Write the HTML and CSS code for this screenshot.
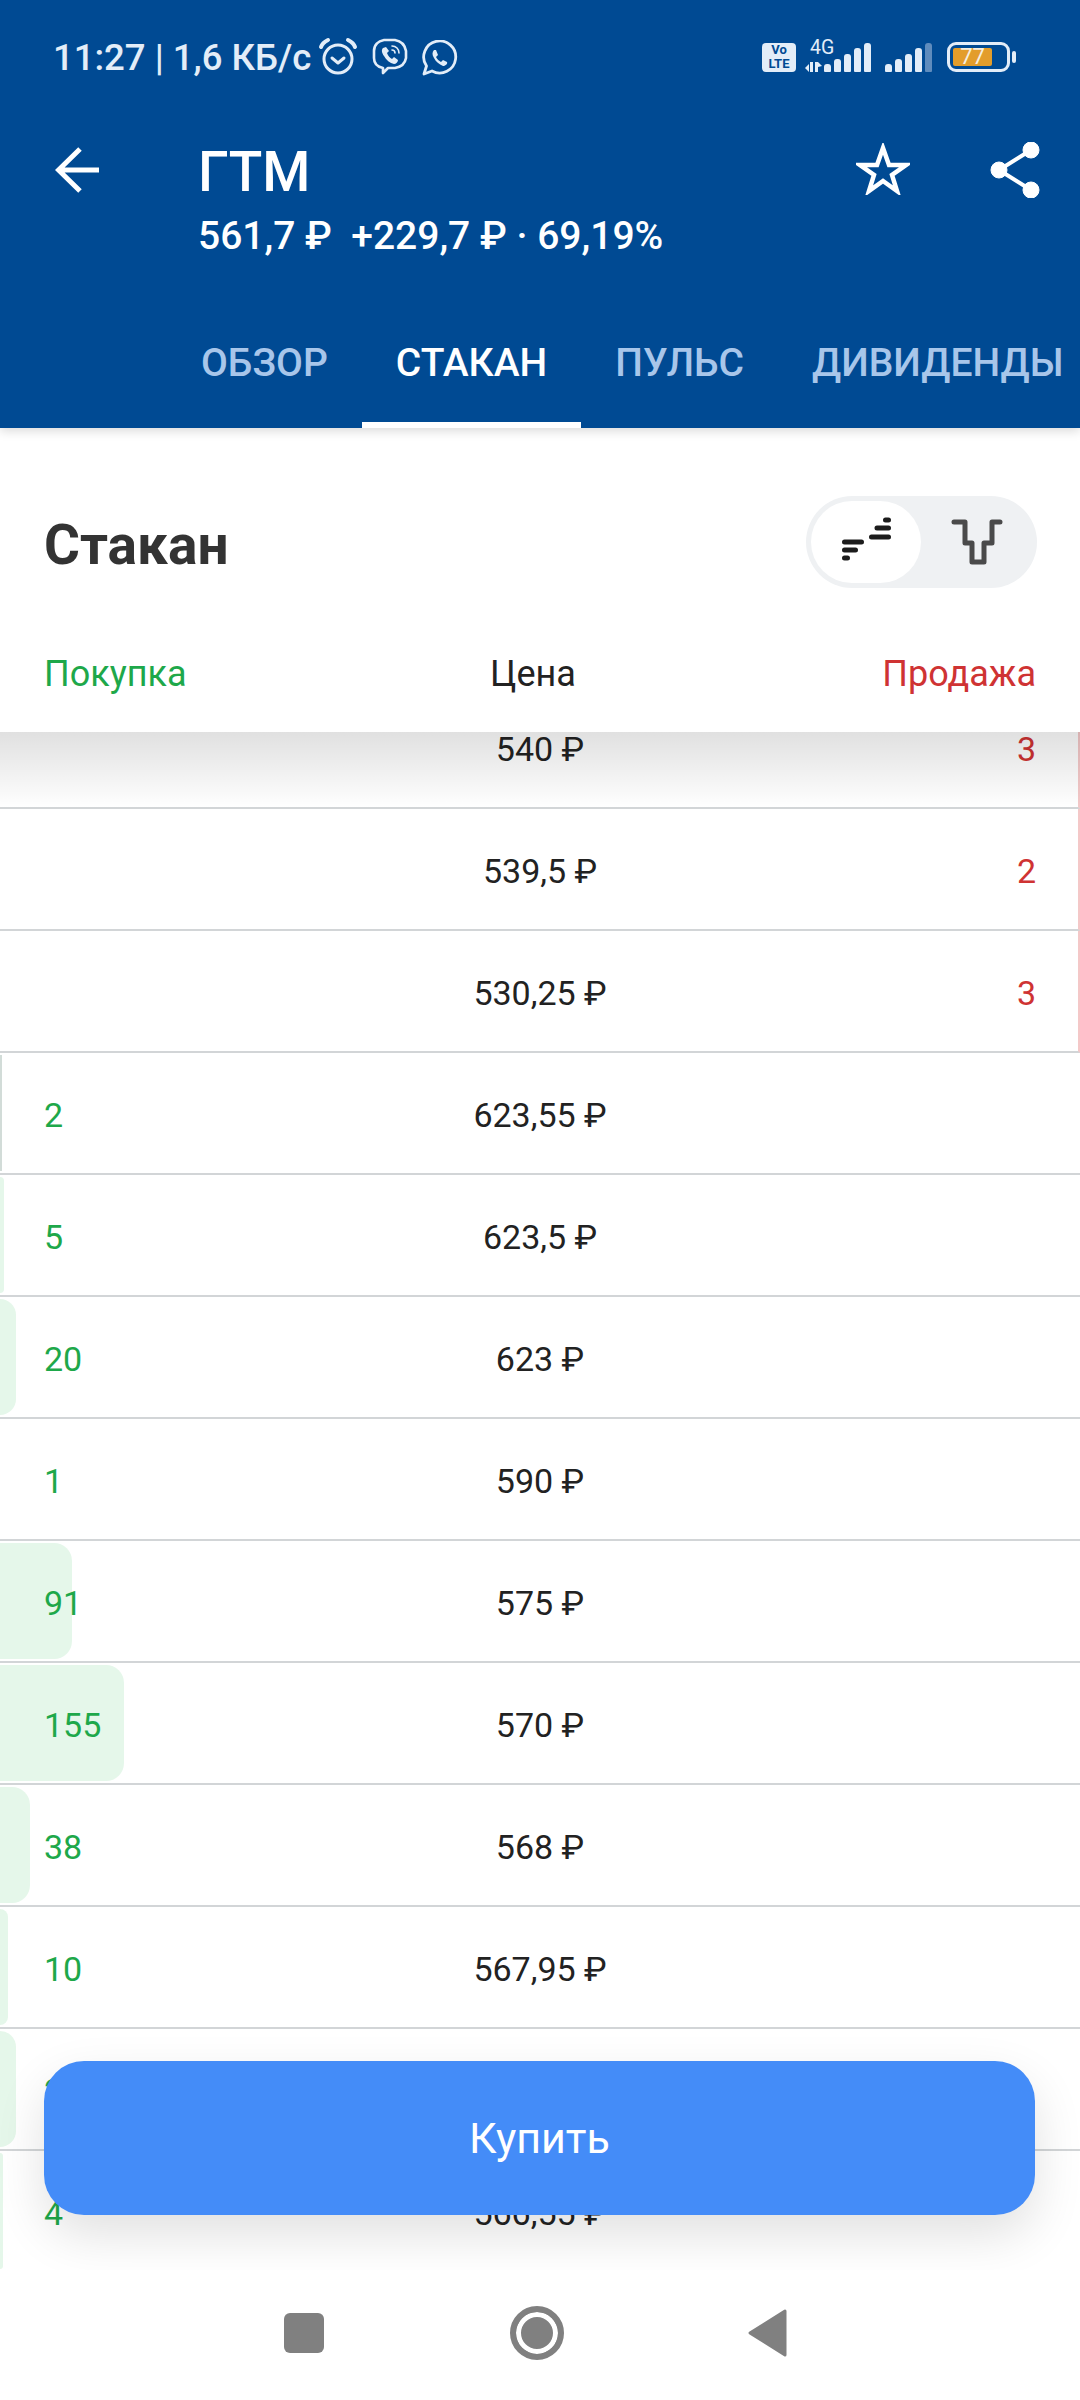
FILE: index.html
```html
<!doctype html>
<html lang="ru">

<head>
    <meta charset="UTF-8">
    <title>ГТМ - Стакан</title>
    <link rel="stylesheet" href="styles.css">
</head>

<body>
    <div class="screen">
        <header class="top">
            <div class="status">
                <span class="status-text">11:27 | 1,6 КБ/с</span>
                <svg class="ico-alarm" width="40" height="40" viewBox="0 0 40 40" fill="none" stroke="#e3edf8" stroke-width="3" stroke-linecap="round" stroke-linejoin="round">
                    <circle cx="20" cy="22" r="14"/>
                    <path d="M14 21l6 5 6-5"/>
                    <path d="M3 10c1-3 3-5 7-7M37 10c-1-3-3-5-7-7" stroke-width="4"/>
                </svg>
                <svg class="ico-viber" width="36" height="38" viewBox="0 0 36 38" fill="none" stroke="#e3edf8" stroke-width="2.600" stroke-linecap="round" stroke-linejoin="round">
                    <path d="M11 30c-5-1-9-4-9-10v-7c0-6 4-10 10-11h11c6 1 10 5 11 11v7c-1 6-5 9-11 10h-7l-5 5z"/>
                    <path d="M11 10c-2 2-1 5 1 8 2 4 6 7 10 8 2 0 4-2 4-4l-4-3-2 2c-2-1-4-3-5-6l2-2-3-4z" fill="#e3edf8" stroke="none"/>
                    <path d="M20 8c4 0 7 3 7 7M20 12c2 0 3 1 3 3" stroke-width="1.600"/>
                </svg>
                <svg class="ico-whatsapp" width="36" height="36" viewBox="0 0 36 36" fill="none" stroke="#e3edf8" stroke-width="2.800" stroke-linejoin="round">
                    <path d="M2 34l2.500-8A16 16 0 1 1 10 31z"/>
                    <path d="M12 10c-2 2-2 5 0 8 2 4 5 6 9 8 2 0 5-2 4-4l-4-2-2 2c-2-1-4-3-5-5l2-2-2-5z" fill="#e3edf8" stroke="none"/>
                </svg>
                <span class="status-gap"></span>
                <span class="volte">Vo<br>LTE</span>
                <span class="net">
                    <span class="net-label">4G</span>
                    <svg width="18" height="10" viewBox="0 0 18 10" fill="#e3edf8"><path d="M0 6l4-4v8zM5 0h3v10H5zM10 0h3v10h-3zM13 0l4 4-4 1z"/></svg>
                </span>
                <span class="bars">
                    <i class="b1"></i><i class="b2"></i><i class="b3"></i><i class="b4"></i><i class="b5"></i>
                </span>
                <span class="bars bars-sim2">
                    <i class="b1"></i><i class="b2"></i><i class="b3"></i><i class="b4"></i><i class="b5 off"></i>
                </span>
                <span class="battery"><span class="battery-fill"><span class="battery-num">77</span></span></span>
                <span class="battery-tip"></span>
            </div>

            <div class="bar">
                <svg class="back" width="46" height="46" viewBox="0 0 46 46" fill="none" stroke="#fff" stroke-width="5">
                    <path d="M44 23H4M25 2L3.500 23 25 44"/>
                </svg>
                <div class="titles">
                    <div class="ticker">ГТМ</div>
                    <div class="quote">561,7 ₽ &nbsp;+229,7 ₽ · 69,19%</div>
                </div>
                <svg class="star" width="54" height="52" viewBox="0 0 54 52" fill="none" stroke="#fff" stroke-width="4.500">
                    <path d="M27 5l6 17h17l-14 10 5 16-14-10-14 10 5-16L4 22h17z"/>
                </svg>
                <svg class="share" width="50" height="56" viewBox="0 0 50 56" fill="#fff" stroke="#fff">
                    <circle cx="41" cy="8" r="8"/>
                    <circle cx="9" cy="28" r="8"/>
                    <circle cx="41" cy="48" r="8"/>
                    <path d="M41 8L9 28l32 20" fill="none" stroke-width="4"/>
                </svg>
            </div>

            <nav class="tabs">
                <a class="tab">ОБЗОР</a>
                <a class="tab on">СТАКАН</a>
                <a class="tab">ПУЛЬС</a>
                <a class="tab">ДИВИДЕНДЫ</a>
            </nav>
        </header>

        <section class="book">
            <div class="book-head">
                <div class="book-title">
                    <h1>Стакан</h1>
                    <div class="switch">
                        <span class="switch-on">
                            <svg width="52" height="50" viewBox="0 0 52 50" fill="none" stroke="#1c1c1c" stroke-width="5" stroke-linecap="round">
                                <path d="M4.500 25h17M4.500 33h11M4.500 41h3M31.500 20h17M37 11h11.500M45.500 3h3"/>
                            </svg>
                        </span>
                        <span class="switch-off">
                            <svg width="52" height="46" viewBox="0 0 52 46" fill="none" stroke="#4a4a4a" stroke-width="5" stroke-linecap="round" stroke-linejoin="round">
                                <path d="M3 3h11v21h7v19h12V24h8V3h8"/>
                            </svg>
                        </span>
                    </div>
                </div>
                <div class="cols">
                    <span class="buy">Покупка</span>
                    <span class="price">Цена</span>
                    <span class="sell">Продажа</span>
                </div>
            </div>

            <div class="rows">
                <div class="row ask"><span class="qty"></span><span class="price">540 ₽</span><span class="sell">3</span></div>
                <div class="row ask"><span class="qty"></span><span class="price">539,5 ₽</span><span class="sell">2</span></div>
                <div class="row ask"><span class="qty"></span><span class="price">530,25 ₽</span><span class="sell">3</span></div>
                <div class="row bid tiny"><i class="fill" style="width:2px"></i><span class="buy">2</span><span class="price">623,55 ₽</span><span class="sell"></span></div>
                <div class="row bid"><i class="fill" style="width:4px"></i><span class="buy">5</span><span class="price">623,5 ₽</span><span class="sell"></span></div>
                <div class="row bid"><i class="fill" style="width:16px"></i><span class="buy">20</span><span class="price">623 ₽</span><span class="sell"></span></div>
                <div class="row bid"><span class="buy">1</span><span class="price">590 ₽</span><span class="sell"></span></div>
                <div class="row bid"><i class="fill" style="width:72px"></i><span class="buy">91</span><span class="price">575 ₽</span><span class="sell"></span></div>
                <div class="row bid"><i class="fill" style="width:124px"></i><span class="buy">155</span><span class="price">570 ₽</span><span class="sell"></span></div>
                <div class="row bid"><i class="fill" style="width:30px"></i><span class="buy">38</span><span class="price">568 ₽</span><span class="sell"></span></div>
                <div class="row bid"><i class="fill" style="width:8px"></i><span class="buy">10</span><span class="price">567,95 ₽</span><span class="sell"></span></div>
                <div class="row bid"><i class="fill" style="width:16px"></i><span class="buy">20</span><span class="price">567 ₽</span><span class="sell"></span></div>
                <div class="row bid"><i class="fill" style="width:3px"></i><span class="buy">4</span><span class="price">566,55 ₽</span><span class="sell"></span></div>
            </div>

            <button class="buy-btn">Купить</button>
        </section>

        <footer class="nav">
            <span class="nav-square"></span>
            <span class="nav-circle"></span>
            <svg width="40" height="48" viewBox="0 0 40 48" fill="#808080" stroke="#808080" stroke-width="3" stroke-linejoin="round"><path d="M37 2v44L2 24z"/></svg>
        </footer>
    </div>
</body>

</html>
```

FILE: styles.css
```css
* {
    margin: 0;
    padding: 0;
    box-sizing: border-box;
}

body {
    background: #fff;
    font-family: Roboto, "Noto Sans", sans-serif;
}

.screen {
    width: 1080px;
    height: 2400px;
    overflow: hidden;
    display: flex;
    flex-direction: column;
}

/* шапка */
.top {
    height: 428px;
    flex: none;
    background: #004a93;
    color: #fff;
    box-shadow: 0 3px 10px rgba(0, 0, 0, .15);
    position: relative;
    z-index: 3;
}

.status {
    height: 116px;
    padding: 34px 0 0 53px;
    display: flex;
    align-items: flex-start;
    color: #e3edf8;
}

.status-text {
    font-size: 36.500px;
    line-height: 48px;
    font-weight: 500;
    white-space: nowrap;
}

.ico-alarm {
    margin: 3px 0 0 7px;
}

.ico-viber {
    margin: 4px 0 0 14px;
}

.ico-whatsapp {
    margin: 6px 0 0 14px;
}

.status-gap {
    flex: 1;
}

.volte {
    width: 34px;
    height: 29px;
    margin-top: 9px;
    background: #e3edf8;
    border-radius: 4px;
    color: #004a93;
    font-size: 13px;
    line-height: 14px;
    font-weight: 700;
    text-align: center;
}

.net {
    width: 19px;
    margin: 6px 0 0 9px;
    display: flex;
    flex-direction: column;
    font-size: 19.500px;
    line-height: 15px;
}

.net-label {
    padding-left: 5px;
    white-space: nowrap;
}

.net svg {
    margin-top: 7px;
}

.bars {
    height: 29px;
    margin-top: 9px;
    display: flex;
    align-items: flex-end;
    gap: 3px;
}

.bars i {
    width: 7px;
    background: #e3edf8;
    border-radius: 3px 3px 1px 1px;
}

.bars .b1 { height: 8px; }
.bars .b2 { height: 13px; }
.bars .b3 { height: 18px; }
.bars .b4 { height: 24px; }
.bars .b5 { height: 29px; }
.bars .off { background: #5f8cbd; }

.bars-sim2 {
    margin-left: 14px;
}

.battery {
    width: 63px;
    height: 30px;
    margin: 8px 0 0 15px;
    border: 3px solid #e3edf8;
    border-radius: 9px;
    padding: 3px;
}

.battery-fill {
    display: block;
    width: 39px;
    height: 18px;
    background: #e39d2b;
    border-radius: 2px;
    text-align: center;
}

.battery-num {
    display: block;
    font-size: 22px;
    line-height: 18px;
    color: #f6efe0;
}

.battery-tip {
    width: 4px;
    height: 12px;
    margin: 17px 64px 0 2px;
    background: #e3edf8;
    border-radius: 2px;
}

.bar {
    height: 190px;
    display: flex;
    align-items: flex-start;
    padding-left: 55px;
}

.back {
    margin-top: 31px;
}

.titles {
    margin-left: 97px;
    flex: 1;
}

.ticker {
    font-size: 55px;
    line-height: 64px;
    font-weight: 500;
    margin-top: 24px;
}

.quote {
    font-size: 39px;
    line-height: 46px;
    font-weight: 500;
    margin-top: 9px;
    white-space: nowrap;
}

.star {
    margin-top: 27px;
}

.share {
    margin: 26px 40px 0 80px;
}

.tabs {
    height: 122px;
    display: flex;
    padding-left: 167px;
}

.tab {
    color: #a8c6ea;
    font-size: 39px;
    font-weight: 500;
    line-height: 114px;
    padding: 0 34px;
    white-space: nowrap;
}

.tab.on {
    color: #fff;
    border-bottom: 6px solid #fff;
}

/* стакан */
.book {
    flex: 1;
    position: relative;
    overflow: hidden;
    display: flex;
    flex-direction: column;
}

.book-head {
    height: 304px;
    flex: none;
    background: #fff;
    position: relative;
    z-index: 2;
}

/* тень под шапкой стакана */
.book-head::after {
    content: "";
    position: absolute;
    left: 0;
    right: 0;
    top: 100%;
    height: 76px;
    background: linear-gradient(rgba(0, 0, 0, .12), rgba(0, 0, 0, 0));
}

.book-title {
    height: 221px;
    padding: 78px 44px 0;
    display: flex;
    justify-content: space-between;
    align-items: flex-start;
}

.book-title h1 {
    font-size: 55px;
    line-height: 78px;
    font-weight: 700;
    color: #333;
}

.switch {
    width: 231px;
    height: 92px;
    margin: -10px -1px 0 0;
    background: #eff1f3;
    border-radius: 46px;
    padding: 5px;
    display: flex;
}

.switch-on,
.switch-off {
    height: 82px;
    display: flex;
    align-items: center;
    justify-content: center;
}

.switch-on {
    width: 110px;
    background: #fff;
    border-radius: 41px;
}

.switch-off {
    flex: 1;
}

.cols,
.row {
    display: grid;
    grid-template-columns: 1fr auto 1fr;
    align-items: center;
    padding: 0 44px;
    font-size: 34px;
}

.cols {
    height: 50px;
    font-size: 36px;
}

.cols .price {
    padding-right: 14px;
}

.price {
    color: #222;
    text-align: center;
}

.buy {
    color: #1ea84a;
}

.sell {
    color: #cf3333;
    text-align: right;
}

.rows {
    margin-top: -45px;
}

.row {
    height: 122px;
    padding-top: 3px;
    border-bottom: 2px solid #d2d5d7;
    position: relative;
}

.row > span {
    position: relative;
}

.row.ask {
    padding-right: 42px;
    border-right: 2px solid #f4c8c8;
}

.fill {
    position: absolute;
    left: 0;
    top: 2px;
    bottom: 2px;
    background: #e5f7ea;
    border-radius: 0 18px 18px 0;
}

.tiny .fill {
    background: #d2dcd8;
    border-radius: 0;
}

.buy-btn {
    position: absolute;
    left: 44px;
    top: 1633px;
    width: 991px;
    height: 154px;
    z-index: 2;
    border: 0;
    border-radius: 40px;
    background: #448cf8;
    color: #fff;
    font-family: inherit;
    font-size: 43px;
    box-shadow: 0 20px 50px rgba(0, 0, 0, .12);
}

/* навигация */
.nav {
    height: 130px;
    flex: none;
    background: #fff;
    position: relative;
    z-index: 3;
    display: flex;
    align-items: center;
    padding-left: 284px;
    padding-bottom: 4px;
}

.nav-square {
    width: 40px;
    height: 40px;
    background: #808080;
    border-radius: 6px;
    margin-right: 186px;
}

.nav-circle {
    width: 54px;
    height: 54px;
    border-radius: 50%;
    border: 6px solid #808080;
    background: #808080;
    box-shadow: inset 0 0 0 5px #fff;
    margin-right: 184px;
}
```
